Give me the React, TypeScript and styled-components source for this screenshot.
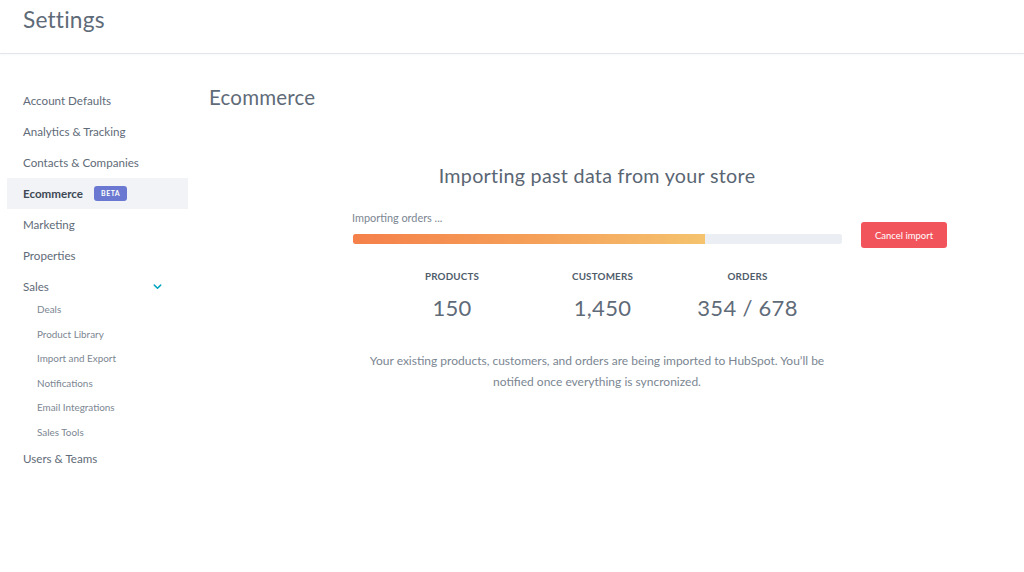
import React from "react";
import styled, { createGlobalStyle } from "styled-components";

const GlobalStyle = createGlobalStyle`
  html, body {
    margin: 0;
    padding: 0;
    background: #ffffff;
    font-family: Lato, "Noto Sans", "Liberation Sans", sans-serif;
    -webkit-font-smoothing: antialiased;
  }
  * {
    box-sizing: border-box;
  }
`;

interface NavEntry {
  label: string;
  active?: boolean;
  beta?: boolean;
  children?: string[];
}

const navItems: NavEntry[] = [
  { label: "Account Defaults" },
  { label: "Analytics & Tracking" },
  { label: "Contacts & Companies" },
  { label: "Ecommerce", active: true, beta: true },
  { label: "Marketing" },
  { label: "Properties" },
  {
    label: "Sales",
    children: [
      "Deals",
      "Product Library",
      "Import and Export",
      "Notifications",
      "Email Integrations",
      "Sales Tools",
    ],
  },
  { label: "Users & Teams" },
];

const stats = [
  { label: "Products", value: "150" },
  { label: "Customers", value: "1,450" },
  { label: "Orders", value: "354 / 678" },
];

const progress = 72;

const App: React.FC = () => {
  return (
    <>
      <GlobalStyle />
      <Page>
        <Header>
          <PageTitle>Settings</PageTitle>
        </Header>
        <Body>
          <Sidebar>
            {navItems.map((item) => (
              <React.Fragment key={item.label}>
                <NavItem $active={item.active}>
                  {item.label}
                  {item.beta && <Badge>BETA</Badge>}
                  {item.children && (
                    <Chevron viewBox="0 0 12 12">
                      <path
                        d="M2.5 4.5 L6 8 L9.5 4.5"
                        fill="none"
                        stroke="#00a4bd"
                        strokeWidth="1.6"
                        strokeLinecap="round"
                        strokeLinejoin="round"
                      />
                    </Chevron>
                  )}
                </NavItem>
                {item.children && (
                  <SubList>
                    {item.children.map((child) => (
                      <SubItem key={child}>{child}</SubItem>
                    ))}
                  </SubList>
                )}
              </React.Fragment>
            ))}
          </Sidebar>
          <Main>
            <SectionTitle>Ecommerce</SectionTitle>
            <ImportPanel>
              <ImportTitle>Importing past data from your store</ImportTitle>
              <ProgressLabel>Importing orders ...</ProgressLabel>
              <Track>
                <Fill style={{ width: `${progress}%` }} />
              </Track>
              <CancelButton>Cancel import</CancelButton>
              <Stats>
                {stats.map((s) => (
                  <Stat key={s.label}>
                    <StatLabel>{s.label}</StatLabel>
                    <StatValue>{s.value}</StatValue>
                  </Stat>
                ))}
              </Stats>
              <Description>
                Your existing products, customers, and orders are being
                imported to HubSpot. You’ll be
                <br />
                notified once everything is syncronized.
              </Description>
            </ImportPanel>
          </Main>
        </Body>
      </Page>
    </>
  );
};

export default App;

const Page = styled.div`
  width: 1024px;
  min-height: 572px;
  background: #ffffff;
`;

const Header = styled.header`
  height: 54px;
  padding: 6px 0 0 23px;
  border-bottom: 1px solid #e3e7ec;
  box-shadow: 0 1px 2px rgba(0, 0, 0, 0.03);
`;

const PageTitle = styled.h1`
  margin: 0;
  font-size: 22.7px;
  line-height: 28px;
  font-weight: 400;
  color: #5f6b78;
  letter-spacing: 0.2px;
`;

const Body = styled.div`
  display: flex;
`;

const Sidebar = styled.nav`
  width: 188px;
  padding: 31px 0 0 7px;
  flex-shrink: 0;
`;

const NavItem = styled.div<{ $active?: boolean }>`
  display: flex;
  align-items: center;
  height: 31px;
  padding: 0 0 0 16px;
  font-size: 11.6px;
  color: ${(p) => (p.$active ? "#3d4854" : "#5f6b78")};
  font-weight: ${(p) => (p.$active ? 700 : 400)};
  background: ${(p) => (p.$active ? "#f1f3f7" : "transparent")};
`;

const Badge = styled.span`
  margin-left: 11px;
  padding: 0 7px;
  height: 15px;
  line-height: 15px;
  border-radius: 3px;
  background: #6a78d1;
  color: #ffffff;
  font-size: 7px;
  font-weight: 700;
  letter-spacing: 0.5px;
`;

const Chevron = styled.svg`
  width: 11px;
  height: 11px;
  margin-left: auto;
  margin-right: 25px;
`;

const SubList = styled.div`
  display: flex;
  flex-direction: column;
  margin: -5px 0 -2px;
`;

const SubItem = styled.div`
  height: 24.6px;
  line-height: 24.6px;
  padding-left: 30px;
  font-size: 9.9px;
  color: #7b8692;
`;

const Main = styled.main`
  flex: 1;
  padding: 31px 39px 0 21px;
`;

const SectionTitle = styled.h2`
  margin: 0;
  font-size: 20.5px;
  line-height: 24px;
  font-weight: 400;
  color: #5f6b78;
  letter-spacing: 0.2px;
`;

const ImportPanel = styled.section`
  display: grid;
  grid-template-columns: 1fr 490px 1fr;
  margin-top: 55px;
`;

const ImportTitle = styled.h3`
  grid-column: 2;
  margin: 0;
  text-align: center;
  font-size: 19.7px;
  line-height: 24px;
  font-weight: 400;
  color: #5a6673;
  letter-spacing: 0.3px;
`;

const ProgressLabel = styled.div`
  grid-column: 2;
  margin-top: 23px;
  font-size: 10.9px;
  line-height: 14px;
  color: #7b8692;
`;

const Track = styled.div`
  grid-column: 2;
  margin: 9px 0 0 1px;
  height: 10px;
  border-radius: 2px;
  background: #ebeff4;
  overflow: hidden;
`;

const Fill = styled.div`
  height: 100%;
  background: linear-gradient(90deg, #f5804a 0%, #f5a25a 55%, #f5c36e 100%);
  border-radius: 2px 0 0 2px;
`;

const CancelButton = styled.button`
  grid-column: 3;
  grid-row: 2 / span 2;
  align-self: end;
  justify-self: start;
  margin: 0 0 -4px 19px;
  width: 86px;
  height: 26px;
  padding: 0;
  border: none;
  border-radius: 3px;
  background: #f2545b;
  color: #ffffff;
  font-family: inherit;
  font-size: 9.5px;
  cursor: pointer;
`;

const Stats = styled.div`
  grid-column: 1 / span 3;
  display: grid;
  grid-template-columns: 156px 145px 145px;
  justify-content: center;
  margin-top: 26px;
`;

const Stat = styled.div`
  display: flex;
  flex-direction: column;
  align-items: center;
`;

const StatLabel = styled.div`
  font-size: 9.8px;
  line-height: 12px;
  font-weight: 700;
  text-transform: uppercase;
  color: #4f5d6b;
  letter-spacing: 0.2px;
`;

const StatValue = styled.div`
  margin-top: 12px;
  font-size: 22px;
  line-height: 28px;
  color: #5f6b78;
  letter-spacing: 0.3px;
`;

const Description = styled.p`
  grid-column: 1 / span 3;
  margin: 28px 0 0;
  text-align: center;
  font-size: 12px;
  line-height: 21px;
  color: #7b8692;
`;
